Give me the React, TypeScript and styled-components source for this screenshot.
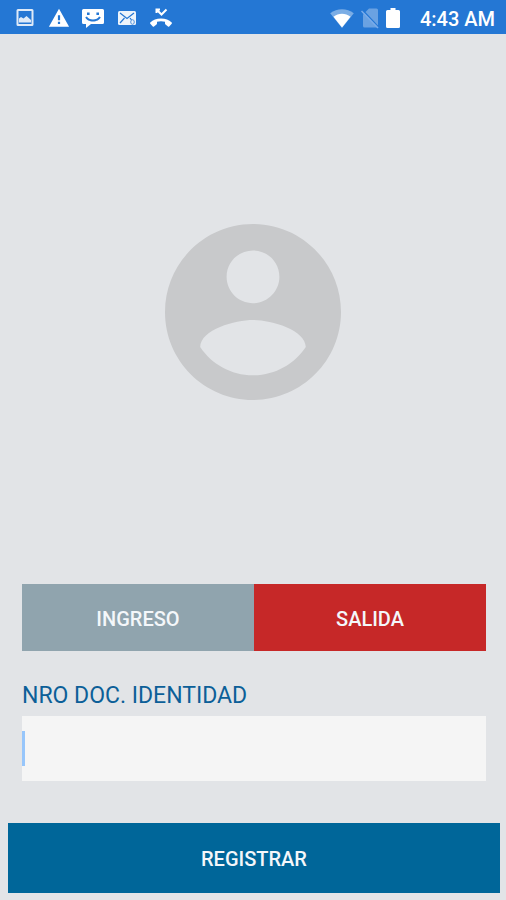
import React, { useState } from 'react';
import styled, { createGlobalStyle } from 'styled-components';

const GlobalStyle = createGlobalStyle`
  *, *::before, *::after { box-sizing: border-box; }
  body { margin: 0; background: #e2e4e7; font-family: Roboto, sans-serif; }
  button, input { font-family: inherit; border: 0; border-radius: 0; padding: 0; }
`;

const Screen = styled.div`
  display: flex;
  flex-direction: column;
  min-height: 100vh;
`;

const StatusBar = styled.header`
  display: flex;
  align-items: center;
  justify-content: space-between;
  height: 34px;
  padding: 2px 11px 0 14px;
  background: #2477d4;
  color: #fff;
`;

const IconGroup = styled.div<{ $gap: number }>`
  display: flex;
  align-items: center;
  gap: ${({ $gap }) => $gap}px;
`;

const StatusIcon = styled.svg`
  display: block;
  flex: none;
  fill: currentColor;
`;

const Clock = styled.time`
  margin-left: 13px;
  padding-top: 2px;
  font-size: 20px;
  line-height: 24px;
  font-weight: 500;
`;

const Form = styled.form`
  display: flex;
  flex: 1;
  flex-direction: column;
`;

const AvatarArea = styled.div`
  display: flex;
  flex: 1;
  align-items: center;
  justify-content: center;
  padding-top: 6px;
`;

const Avatar = styled.svg`
  width: 176px;
  height: 176px;
  fill: #c8c9cb;
`;

const Choices = styled.div`
  display: grid;
  grid-template-columns: 1fr 1fr;
  margin: 0 20px 0 22px;
`;

const ActionButton = styled.button<{ $color: string; $height: number }>`
  height: ${({ $height }) => $height}px;
  padding-top: 2px;
  background: ${({ $color }) => $color};
  color: #f4f7fa;
  font-size: 20px;
  font-weight: 500;
  line-height: 24px;
  cursor: pointer;
`;

const Field = styled.div`
  display: flex;
  flex-direction: column;
  margin: 31px 20px 42px 22px;
`;

const FieldLabel = styled.label`
  padding-bottom: 6px;
  color: #0c5f98;
  font-size: 23px;
  line-height: 28px;
`;

const InputWrap = styled.div`
  position: relative;
  display: flex;
`;

const TextInput = styled.input`
  width: 100%;
  height: 65px;
  padding-left: 4px;
  background: #f5f5f5;
  color: #333;
  font-size: 23px;
  outline: 0;
`;

const Caret = styled.span`
  position: absolute;
  top: 15px;
  left: 0;
  width: 3px;
  height: 35px;
  background: #97c6fb;
  pointer-events: none;
`;

const Footer = styled.div`
  display: grid;
  padding: 0 6px 7px 8px;
`;

export default function App() {
  const [documentId, setDocumentId] = useState('');

  return (
    <>
      <GlobalStyle />
      <Screen>
        <StatusBar>
          <IconGroup $gap={12}>
            <StatusIcon width="22" height="22" viewBox="0 0 22 22" opacity="0.85">
              <path fillRule="evenodd" d="M4 2h14a1.500 1.500 0 0 1 1.500 1.500v14a1.500 1.500 0 0 1-1.500 1.500H4a1.500 1.500 0 0 1-1.500-1.500v-14A1.500 1.500 0 0 1 4 2zm.5 2v13h13V4z" />
              <path d="M5 15.500v-4l2-1.500 2.500 1.500L12.500 9l4.500 4v2.500z" />
            </StatusIcon>
            <StatusIcon width="22" height="22" viewBox="0 0 24 24">
              <path d="M1 21.500h22L12 2 1 21.500zm12.200-3h-2.400v-2.300h2.400v2.300zm0-4h-2.400V9h2.400v5.500z" />
            </StatusIcon>
            <StatusIcon width="22" height="22" viewBox="0 0 22 22">
              <path fillRule="evenodd" d="M1.500 2h19A1.500 1.500 0 0 1 22 3.500v12a1.500 1.500 0 0 1-1.500 1.500H9l-5 4v-4H1.500A1.500 1.500 0 0 1 0 15.500v-12A1.500 1.500 0 0 1 1.500 2zM5 5.500v2.600h2.600V5.500zm9.400 0v2.600H17V5.500zM3.300 10.200c1.800 5.600 13.600 5.600 15.400 0l-1.700-.6c-1.500 3.900-10.500 3.900-12 0z" />
            </StatusIcon>
            <StatusIcon width="22" height="22" viewBox="0 0 22 22" opacity="0.92">
              <rect x="2" y="4" width="18" height="14" rx="1.500" />
              <path d="M4 6l7 5.500L18 6M4 16l4.500-5M14 11l1.500 2" fill="none" stroke="#2477d4" strokeWidth="1.200" />
              <ellipse cx="16.500" cy="15" rx="1.800" ry="2.300" fill="none" stroke="#5b98dd" />
            </StatusIcon>
            <StatusIcon width="22" height="22" viewBox="0 0 22 22">
              <path d="M11 11.500C6.500 11.500 3 13 .3 15.500c-.4.4-.4.8 0 1.200l2.500 2.700c.4.400.8.400 1.200 0l2.500-1.900c.3-.2.500-.5.500-.9v-1.800c2.500-.8 5.500-.8 8 0v1.800c0 .4.200.7.500.9l2.500 1.900c.4.400.8.400 1.200 0l2.500-2.700c.4-.4.400-.8 0-1.200C19 13 15.500 11.500 11 11.500z" />
              <path d="M6.500 6V2.500H10M7 3l4.500 4.500L16.500 2.500" fill="none" stroke="currentColor" strokeWidth="2" />
            </StatusIcon>
          </IconGroup>
          <IconGroup $gap={7}>
            <StatusIcon width="24" height="22" viewBox="0 0 24 22">
              <path opacity="0.4" d="M12 21L.2 6.200C7 .8 17 .8 23.800 6.200z" />
              <path d="M12 20.500L3.500 9.800c4.900-4 12.100-4 17 0z" />
            </StatusIcon>
            <StatusIcon width="18" height="22" viewBox="0 0 18 22">
              <path opacity="0.32" d="M8 1.500h7.500A1.500 1.500 0 0 1 17 3v16a1.500 1.500 0 0 1-1.500 1.500h-12A1.500 1.500 0 0 1 2 19V7.500z" />
              <path d="M1 2.500l17 18" fill="none" stroke="#2477d4" strokeWidth="1.500" />
              <path d="M.5 4L17 21" fill="none" stroke="#79acea" strokeWidth="1.500" />
            </StatusIcon>
            <StatusIcon width="14" height="22" viewBox="0 0 14 22">
              <path d="M4.500 1h5v2h3A1.500 1.500 0 0 1 14 4.500v15a1.500 1.500 0 0 1-1.500 1.500h-11A1.500 1.500 0 0 1 0 19.500v-15A1.500 1.500 0 0 1 1.500 3h3z" />
            </StatusIcon>
            <Clock>4:43 AM</Clock>
          </IconGroup>
        </StatusBar>
        <Form onSubmit={(event) => event.preventDefault()}>
          <AvatarArea>
            <Avatar viewBox="2 2 20 20" aria-hidden="true">
              <path d="M12 2C6.480 2 2 6.480 2 12s4.480 10 10 10 10-4.480 10-10S17.520 2 12 2zm0 3c1.660 0 3 1.340 3 3s-1.340 3-3 3-3-1.340-3-3 1.340-3 3-3zm0 14.200c-2.500 0-4.710-1.280-6-3.220.03-1.990 4-3.080 6-3.080 1.990 0 5.970 1.090 6 3.080-1.290 1.940-3.500 3.220-6 3.220z" />
            </Avatar>
          </AvatarArea>
          <Choices>
            <ActionButton type="button" $color="#90a4ae" $height={67}>INGRESO</ActionButton>
            <ActionButton type="button" $color="#c62828" $height={67}>SALIDA</ActionButton>
          </Choices>
          <Field>
            <FieldLabel htmlFor="document-id">NRO DOC. IDENTIDAD</FieldLabel>
            <InputWrap>
              <TextInput
                id="document-id"
                value={documentId}
                onChange={(event) => setDocumentId(event.target.value)}
              />
              {documentId === '' && <Caret />}
            </InputWrap>
          </Field>
          <Footer>
            <ActionButton type="submit" $color="#006699" $height={70}>REGISTRAR</ActionButton>
          </Footer>
        </Form>
      </Screen>
    </>
  );
}
